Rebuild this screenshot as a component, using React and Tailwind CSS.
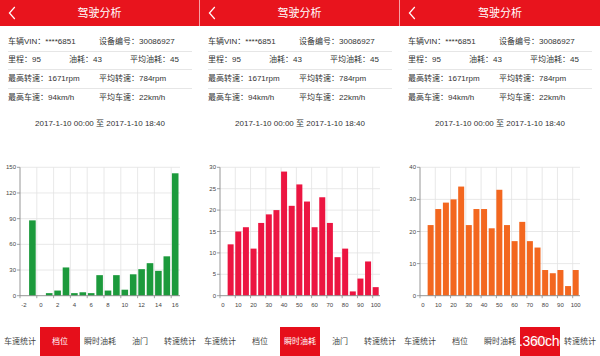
import React from "react";

const BASE = 155.7;
const PH = 128.4;

function Chart({ yMax, yStep, bars, color, gx, lx, xLabels, barW }) {
  const y = (v) => BASE - (v / yMax) * PH;
  const yTicks = [];
  for (let v = 0; v <= yMax; v += yStep) yTicks.push(v);
  return (
    <svg width="200" height="187" viewBox="0 0 200 187" className="block">
      {xLabels.map((v, i) =>
        i === 0 ? null : (
          <line key={"vg" + v} x1={gx(v)} x2={gx(v)} y1={y(yMax)} y2={BASE} stroke="#e2e2e2" strokeWidth="0.8" />
        )
      )}
      {yTicks.map((v) =>
        v === 0 ? null : (
          <line key={"hg" + v} x1={20} x2={180} y1={y(v)} y2={y(v)} stroke="#e2e2e2" strokeWidth="0.8" />
        )
      )}
      {bars.map(([xv, val]) => (
        <rect key={"b" + xv} x={lx(xv) - barW / 2} y={y(val)} width={barW} height={BASE - y(val)} fill={color} />
      ))}
      <line x1={20} x2={20} y1={y(yMax)} y2={BASE} stroke="#8a8a8a" strokeWidth="0.9" />
      <line x1={20} x2={180} y1={BASE} y2={BASE} stroke="#8a8a8a" strokeWidth="0.9" />
      {yTicks.map((v) => (
        <g key={"yt" + v}>
          <line x1={17} x2={20} y1={y(v)} y2={y(v)} stroke="#8a8a8a" strokeWidth="0.8" />
          <text x={16} y={y(v)} fontSize="6" fill="#444" textAnchor="end" dominantBaseline="central">
            {v}
          </text>
        </g>
      ))}
      {xLabels.map((v) => (
        <g key={"xt" + v}>
          <line x1={gx(v)} x2={gx(v)} y1={BASE} y2={BASE + 2.5} stroke="#8a8a8a" strokeWidth="0.8" />
          <text x={lx(v)} y={165} fontSize="6" fill="#444" textAnchor="middle" dominantBaseline="central">
            {v}
          </text>
        </g>
      ))}
    </svg>
  );
}

const TABS = ["车速统计", "档位", "瞬时油耗", "油门", "转速统计"];

function Panel({ chart, active, divider, watermark }) {
  return (
    <div className="w-[200px] h-[356px] flex flex-col bg-white">
      <div
        className={
          "h-[26px] bg-[#e8141d] relative flex items-center justify-center " +
          (divider ? "border-r border-[#f7a0a4]" : "")
        }
      >
        <svg width="8" height="14" viewBox="0 0 8 14" className="absolute left-[8px] top-[6px]">
          <path d="M6.8 1 L1.4 7 L6.8 13" fill="none" stroke="#fff" strokeWidth="1.2" />
        </svg>
        <span className="text-white text-[11px] leading-none">驾驶分析</span>
      </div>
      <div className="mt-[7px] mx-[8px] text-[8px] text-[#333] leading-none">
        <div className="h-[18.5px] flex items-center border-b border-[#e6e6e6]">
          <span className="w-[91px]">车辆VIN：****6851</span>
          <span>设备编号：30086927</span>
        </div>
        <div className="h-[18.5px] flex items-center border-b border-[#e6e6e6]">
          <span className="w-[61px]">里程：95</span>
          <span className="w-[61px]">油耗：43</span>
          <span>平均油耗：45</span>
        </div>
        <div className="h-[18.5px] flex items-center border-b border-[#e6e6e6]">
          <span className="w-[91px]">最高转速：1671rpm</span>
          <span>平均转速：784rpm</span>
        </div>
        <div className="h-[18.5px] flex items-center">
          <span className="w-[91px]">最高车速：94km/h</span>
          <span>平均车速：22km/h</span>
        </div>
      </div>
      <div className="h-[33px] flex items-center justify-center text-[8px] text-[#333] leading-none">
        2017-1-10 00:00 至 2017-1-10 18:40
      </div>
      {chart}
      <div className="h-[29px] flex">
        {TABS.map((t, i) => (
          <div
            key={t}
            className={
              "w-[40px] h-full flex items-center justify-center text-[8px] leading-none whitespace-nowrap relative overflow-hidden " +
              (i === active ? "bg-[#e60f1b] text-white" : "text-[#444]")
            }
          >
            <span className={i === active && watermark ? "text-[#f58a8f]" : ""}>{t}</span>
            {i === active && watermark ? (
              <span className="absolute left-[-1px] top-[7px] text-[14px] leading-none text-white font-['Liberation_Sans',sans-serif] tracking-[-0.3px]">
                .360che
              </span>
            ) : null}
          </div>
        ))}
      </div>
    </div>
  );
}

const g1 = (v) => 20 + (v + 2) * 8.4;
const l1 = (v) => 24 + (v + 2) * 8.4;
const g2 = (v) => 20 + v * 1.527;
const l2 = (v) => 23 + v * 1.527;

const gearVals = [88, 0, 3, 6, 33, 3, 4, 3, 24, 6, 24, 7, 25, 31, 38, 29, 46, 143];
const fuelVals = [12, 15, 16, 11, 17, 19, 20, 29, 21, 26, 22, 16, 23, 17, 9, 11, 1, 4, 8, 2];
const throttleVals = [22, 27, 29, 30, 34, 22, 27, 27, 21, 33, 22, 17, 23, 17, 15, 8, 7, 8, 3, 8];

export default function App() {
  const gearBars = gearVals.map((v, i) => [i - 1, v]);
  const fuelBars = fuelVals.map((v, i) => [(i + 1) * 5, v]);
  const thrBars = throttleVals.map((v, i) => [(i + 1) * 5, v]);
  const lab1 = [-2, 0, 2, 4, 6, 8, 10, 12, 14, 16];
  const lab2 = [0, 10, 20, 30, 40, 50, 60, 70, 80, 90, 100];
  return (
    <div className="w-[600px] h-[356px] flex overflow-hidden bg-white font-['Liberation_Sans','Noto_Sans_CJK_SC',sans-serif]">
      <Panel
        active={1}
        divider
        chart={<Chart yMax={150} yStep={30} bars={gearBars} color="#1c9a3c" gx={g1} lx={l1} xLabels={lab1} barW={6.6} />}
      />
      <Panel
        active={2}
        divider
        chart={<Chart yMax={30} yStep={5} bars={fuelBars} color="#ec1541" gx={g2} lx={l2} xLabels={lab2} barW={6} />}
      />
      <Panel
        active={3}
        watermark
        chart={<Chart yMax={40} yStep={10} bars={thrBars} color="#f3671f" gx={g2} lx={l2} xLabels={lab2} barW={6} />}
      />
    </div>
  );
}
